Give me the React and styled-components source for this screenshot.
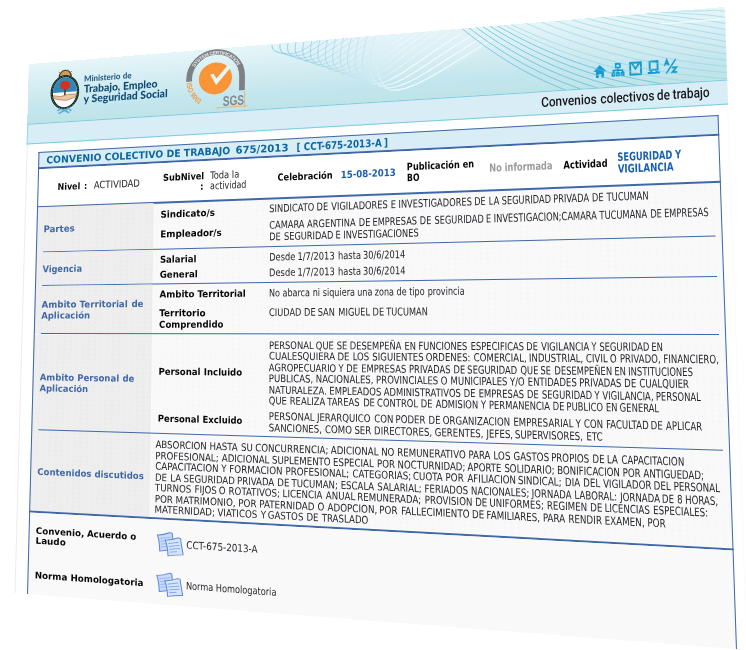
import React, { useLayoutEffect, useRef } from "react";
import styled, { createGlobalStyle } from "styled-components";

/* ---------- projection of the flat sheet onto the tilted one ---------- */
const FLAT = { x: 38, y: 150, w: 680, h: 488 };

const project = (x, y) => {
  const u = (x - FLAT.x) / FLAT.w;
  const v = (y - FLAT.y) / FLAT.h;
  return [
    38.5 + 680 * u - 11.5 * v + 30 * u * v,
    152 - 37 * u + 442 * v + 92 * u * v,
  ];
};

const tiltSmall = (r, fit, anchor) => {
  const flatX = anchor + (r.left + r.width / 2 - anchor) * fit;
  const flatY = r.top + r.height / 2;
  const [x, y] = project(flatX, flatY);
  const [x1, y1] = project(flatX + 1, flatY);
  const [x2, y2] = project(flatX, flatY + 1);
  const m = [
    (x1 - x) * fit, (y1 - y) * fit, x2 - x, y2 - y,
    x - (r.left + r.width / 2), y - flatY,
  ];
  return `matrix(${m.map((n) => n.toFixed(5)).join(",")})`;
};

const tiltPanel = (r) => {
  const q = [
    project(r.left, r.top), project(r.right, r.top),
    project(r.right, r.bottom), project(r.left, r.bottom),
  ].map(([x, y]) => [x - r.left, y - r.top]);
  const [[x0, y0], [x1, y1], [x2, y2], [x3, y3]] = q;
  const sx = x0 - x1 + x2 - x3;
  const sy = y0 - y1 + y2 - y3;
  const det = (x1 - x2) * (y3 - y2) - (x3 - x2) * (y1 - y2);
  const g = (sx * (y3 - y2) - (x3 - x2) * sy) / det;
  const h = ((x1 - x2) * sy - sx * (y1 - y2)) / det;
  const W = r.width;
  const H = r.height;
  const m = [
    (x1 - x0 + g * x1) / W, (y1 - y0 + g * y1) / W, 0, g / W,
    (x3 - x0 + h * x3) / H, (y3 - y0 + h * y3) / H, 0, h / H,
    0, 0, 1, 0,
    x0, y0, 0, 1,
  ];
  return `matrix3d(${m.map((n) => n.toFixed(9)).join(",")})`;
};

/* ---------- styles ---------- */
const Global = createGlobalStyle`
  * { box-sizing: border-box; }
  body { margin: 0; background: #fff; overflow: hidden; }
`;

const Stage = styled.main`
  position: relative;
  width: 746px;
  height: 650px;
  overflow: hidden;
  background: #fff;
  padding: 52.4px 0 0 26.2px;
  font-family: "DejaVu Sans Condensed", "DejaVu Sans", sans-serif;
  font-stretch: condensed;
`;

const Sheet = styled.div`
  position: relative;
  width: 702.2px;
`;

const Fill = styled.div`
  position: absolute;
  inset: 0 ${(p) => p.$right || "0"} 0 0;
  background: ${(p) => p.$bg};
  transform-origin: 0 0;
`;

const Rule = styled.div`
  position: absolute;
  left: ${(p) => p.$inset || 0}px;
  right: ${(p) => p.$inset || 0}px;
  ${(p) => (p.$top ? "top: 0;" : "bottom: 0;")}
  height: ${(p) => p.$size || 1}px;
  background: ${(p) => p.$color || "#3f68a9"};
`;

const Edge = styled.div`
  position: absolute;
  top: 0;
  bottom: 0;
  ${(p) => p.$side}: 0;
  width: 1.2px;
  background: ${(p) => p.$color || "#3f68a9"};
`;

const Header = styled.header`
  position: relative;
  height: 65.6px;
`;

const HeaderContent = styled.div`
  position: relative;
  display: flex;
  height: 100%;
  padding-left: 21.8px;
`;

const Brand = styled.div`
  display: flex;
  align-items: center;
  width: 137px;
`;

const BrandText = styled.div`
  display: flex;
  flex-direction: column;
  padding: 0 0 3px 4px;
`;

const Nav = styled.nav`
  display: flex;
  gap: 4.4px;
  padding-top: 43.5px;
  margin-left: 349.5px;
`;

const Icon = styled.svg`
  display: block;
  flex: none;
  overflow: visible;
  width: ${(p) => p.$w}px;
  height: ${(p) => p.$h}px;
`;

const Waves = styled.svg`
  position: absolute;
  left: 0;
  top: 0;
  width: 746px;
  height: 150px;
  pointer-events: none;
`;

const Band = styled.div`
  position: relative;
  height: 22.8px;
  margin-bottom: 9.2px;
`;

const BandContent = styled.div`
  display: flex;
  justify-content: flex-end;
  align-items: center;
  height: 100%;
  padding-right: 18px;
`;

const Table = styled.section`
  position: relative;
  width: 680px;
  margin-left: 11.8px;
`;

const Title = styled.div`
  position: relative;
  display: flex;
  align-items: center;
  height: 19px;
  padding-left: 8px;
`;

const Info = styled.div`
  position: relative;
  display: grid;
  grid-template-columns: 35.5px 69px 47px 66.6px 63.4px 66px 82px 74.5px 53.5px 1fr;
  align-items: center;
  height: 42.4px;
  padding-left: 20.5px;
`;

const Row = styled.div`
  position: relative;
  display: grid;
  grid-template-columns: ${(p) => (p.$wide ? "121px 1fr" : "123.2px 107.8px 1fr")};
  height: ${(p) => p.$h}px;
`;

const Heading = styled.div`
  position: relative;
  display: flex;
  flex-direction: column;
  justify-content: center;
  padding-left: 7.5px;
`;

const Stack = styled.div`
  position: relative;
  display: flex;
  flex-direction: column;
  padding-top: ${(p) => p.$top || 0}px;
`;

const DocGrid = styled.div`
  position: relative;
  height: 90px;
  padding-top: 4px;
`;

const DocRow = styled.div`
  position: relative;
  display: grid;
  grid-template-columns: 116px 29px 1fr;
  align-items: center;
  height: 43px;
  padding-left: 7px;
`;

const TextLine = styled.div`
  flex: none;
  width: ${(p) => p.$width}px;
  white-space: pre;
  height: ${(p) => p.$lh || 11.5}px;
  line-height: ${(p) => p.$lh || 11.5}px;
  margin-top: ${(p) => p.$mt || 0}px;
  margin-left: ${(p) => p.$ml || 0}px;
  color: ${(p) => p.$color || "#25252b"};
  font-size: ${(p) => p.$size || 10.7}px;
  font-weight: ${(p) => p.$weight || (p.$bold ? 700 : 400)};
  font-family: ${(p) => p.$font || "inherit"};
  font-stretch: ${(p) => (p.$font ? "normal" : "condensed")};
`;

const Word = styled.span`
  display: inline-block;
`;

const WIDE = '"DejaVu Sans", sans-serif';
const BLUE = "#4169a8";

/* One line of text; `w` is the width that the line takes on the flat sheet. */
const Line = ({ w, children, ...rest }) => (
  <TextLine data-fit={w} $width={w} {...rest}>
    {children.split(" ").map((word, i) => (
      <React.Fragment key={i}>
        {i > 0 && " "}
        <Word data-tilt="small">{word}</Word>
      </React.Fragment>
    ))}
  </TextLine>
);

const Label = (p) => <Line $bold $font={WIDE} $size={10} $color="#080808" {...p} />;

/* ---------- drawings ---------- */
const headerShape = "M29,64 L725,7 L727,79.5 L28.5,123.5 Z";

const range = (n) => Array.from({ length: n }, (_, i) => i);

const HeaderWaves = () => (
  <Waves viewBox="0 0 746 150" fill="none">
    <defs>
      <clipPath id="hd"><path d={headerShape} /></clipPath>
      <linearGradient id="fan" gradientUnits="userSpaceOnUse" x1="275" y1="0" x2="400" y2="0">
        <stop offset="0" stopColor="#62bddb" />
        <stop offset=".5" stopColor="#a6d9ea" />
        <stop offset="1" stopColor="#f4fcfe" />
      </linearGradient>
      <linearGradient id="glow" x1="0" y1="0" x2="0" y2="1">
        <stop offset="0" stopColor="#e2f0f9" stopOpacity=".9" />
        <stop offset="1" stopColor="#e2f0f9" stopOpacity="0" />
      </linearGradient>
    </defs>
    <g clipPath="url(#hd)">
      <path d="M272,44 Q278,54 291,55 Q345,70 378,85 Q392,94 412,86 Q445,76 495,40 L465,25 Z" fill="url(#glow)" opacity=".6" />
      {range(15).map((i) => {
        const t = i / 14;
        return (
          <path
            key={`a${i}`}
            d={`M${272 + i * 8},${45 - i * 0.9} C${272 + t * 102},${50 + t * 14} ${274 + t * 100},${52 + t * 28} ${286 + t * 104},${54 + t * 36}`}
            stroke="url(#fan)"
            strokeWidth={i > 11 ? 1.3 : 1}
            opacity={i > 9 ? 0.9 : 0.7}
          />
        );
      })}
      {range(18).map((i) => {
        const t = i / 17;
        const ex = 318 + i * 10.2;
        const ey = i < 12 ? 41 - i * 0.9 : 30 + (i - 12) * 2;
        return (
          <path
            key={`b${i}`}
            d={`M${286 + t * 104},${54 + t * 36} C${300 + t * 112},${54 + t * 39} ${ex - 16 - t * 30},${ey + 9 + t * 18} ${ex},${ey}`}
            stroke="url(#fan)"
            strokeWidth={i > 13 ? 1.2 : 0.9}
            opacity={i > 13 ? 0.9 : 0.65}
          />
        );
      })}
      {range(19).map((i) => {
        const sx = 462 + (i < 8 ? i * 7 : 49 + (i - 7) * 15);
        const sy = 28.5 - (sx - 462) * 0.082;
        const ey = 121 - i * 6;
        return (
          <path
            key={`c${i}`}
            d={`M${sx},${sy} C${sx + 48},${sy + (ey - sy) * 0.42} ${Math.min(sx + 120, 705)},${ey - 5} 735,${ey}`}
            stroke={i < 6 ? "#5dbcdb" : "#8ad0e4"}
            strokeWidth="1"
            opacity={i < 6 ? 0.75 : 0.55}
          />
        );
      })}
      <path d="M660,24 L724,19" stroke="#fff" opacity=".8" />
    </g>
  </Waves>
);

const CoatOfArms = () => (
  <Icon data-tilt="small" $w={30} $h={50} viewBox="0 0 30 50">
    <path d="M9,9 A6,7 0 0 1 21,9 Z" fill="#d59a55" stroke="#3c3324" strokeWidth="1.2" />
    <path d="M10,5 L8.5,3.4 M13,3 L12.4,1.4 M17,3 L17.6,1.4 M20,5 L21.5,3.4" stroke="#8c6a32" strokeWidth=".9" />
    <ellipse cx="15" cy="26" rx="14.4" ry="18.8" fill="#13261c" />
    <ellipse cx="15" cy="26" rx="13.2" ry="17.7" fill="none" stroke="#6f9b83" strokeWidth=".7" strokeDasharray="1.6 1.3" />
    <ellipse cx="15" cy="26" rx="12" ry="16.4" fill="#f8fafa" />
    <path d="M3,26 A12,16.4 0 0 1 27,26 Z" fill="#2f86bb" />
    <path d="M14.2,20 h1.7 v11 h-1.7 z" fill="#6c3c28" />
    <path d="M10.5,21 q-1.5,-7.5 4.5,-7.5 q6.5,.5 5,7.5 l-2,1.6 h-5 z" fill="#d13222" />
    <path d="M3.4,29 L11,30.5 Q17,27.5 26.6,29 L25.8,32 L17,35 L10,34 L4,32 Z" fill="#ecc5a2" stroke="#a47550" strokeWidth=".7" />
    <path d="M11,44 Q15,48 19,44 L22,47 M19,44 L15,46 L9,49 M11,44 L8,46 M15,46 L20,49" fill="none" stroke="#5eb2df" strokeWidth="1.8" />
  </Icon>
);

const SgsBadge = () => (
  <Icon data-tilt="small" $w={60} $h={65} viewBox="0 0 60 65">
    <defs>
      <path id="arcTop" d="M4.6,31 A25,25.2 0 0 1 54.6,31" />
      <path id="arcIso" d="M0.4,34 A30,31 0 0 0 15,58" />
    </defs>
    <path d="M3,32.5 V30 A26.6,26.6 0 0 1 56.2,30 V45.5" fill="none" stroke="#7e8083" strokeWidth="5.8" />
    <text fontFamily="Liberation Sans, sans-serif" fontWeight="700" fontSize="5" fill="#e6eaeb">
      <textPath href="#arcTop" startOffset="14" textLength="52">SYSTEM CERTIFICATION</textPath>
    </text>
    <circle cx="29.4" cy="31" r="16.7" fill="#f99437" />
    <path d="M24,26.5 L27.5,26 L30.4,31.2 L41.5,18.5 L45,20.5 L30.2,38 Z" fill="#e9f6f8" />
    <text fontFamily="Liberation Sans, sans-serif" fontWeight="700" fontSize="7.4" fill="#f39a4c">
      <textPath href="#arcIso" textLength="27" lengthAdjust="spacingAndGlyphs">ISO 9001</textPath>
    </text>
    <text x="37" y="60.5" fontFamily="Liberation Sans, sans-serif" fontWeight="700" fontSize="14.5" textLength="21.5" lengthAdjust="spacingAndGlyphs" fill="#85888a">SGS</text>
    <path d="M30,62 H62 M59,46 V64" stroke="#efae74" strokeWidth=".9" />
  </Icon>
);

const C = "#129bd0";
const NavIcon = ({ children }) => (
  <Icon data-tilt="small" $w={13.3} $h={13} viewBox="0 0 13 13" fill="none" stroke={C} strokeWidth="1.9">
    {children}
  </Icon>
);

const DocIcon = () => (
  <Icon data-tilt="small" $w={27} $h={27} viewBox="0 0 27 27">
    <g stroke="#5f88da" strokeWidth="1" strokeLinejoin="round">
      <path d="M1,4.5 Q6,4.5 12.5,1.5 Q16,.8 15.5,4 L17,19 Q10,20 3.5,21.5 Q3,10 1,4.5 Z" fill="#c6dafc" />
      <path d="M3.5,8 L14,6 M4,11 L14.5,9 M4.5,14 L12,12.6 M4.5,17 L12,15.6" stroke="#94b4ee" strokeWidth=".8" />
      <path d="M8.5,9.5 Q14,9.5 20.5,6.5 Q24.5,6 23.5,9 L26,24 Q18,24.5 11.5,26 Q11,15 8.5,9.5 Z" fill="#d6e5fe" />
      <path d="M11.5,13 L21.5,11 M12,16 L22.5,14.3 M12.5,19 L23,17.5 M13,22 L20,21" stroke="#7fa3e8" strokeWidth=".9" />
    </g>
  </Icon>
);

/* ---------- data ---------- */
const INCLUIDO = [
  [387, "PERSONAL QUE SE DESEMPEÑA EN FUNCIONES ESPECIFICAS DE VIGILANCIA Y SEGURIDAD EN"],
  [441, "CUALESQUIERA DE LOS SIGUIENTES ORDENES: COMERCIAL, INDUSTRIAL, CIVIL O PRIVADO, FINANCIERO,"],
  [415.5, "AGROPECUARIO Y DE EMPRESAS PRIVADAS DE SEGURIDAD QUE SE DESEMPEÑEN EN INSTITUCIONES"],
  [410.7, "PUBLICAS, NACIONALES, PROVINCIALES O MUNICIPALES Y/O ENTIDADES PRIVADAS DE CUALQUIER"],
  [422.5, "NATURALEZA. EMPLEADOS ADMINISTRATIVOS DE EMPRESAS DE SEGURIDAD Y VIGILANCIA, PERSONAL"],
  [381.4, "QUE REALIZA TAREAS DE CONTROL DE ADMISION Y PERMANENCIA DE PUBLICO EN GENERAL"],
];

const CONTENIDOS = [
  [513.6, "ABSORCION HASTA SU CONCURRENCIA; ADICIONAL NO REMUNERATIVO PARA LOS GASTOS PROPIOS DE LA CAPACITACION"],
  [533, "PROFESIONAL; ADICIONAL SUPLEMENTO ESPECIAL POR NOCTURNIDAD; APORTE SOLIDARIO; BONIFICACION POR ANTIGUEDAD;"],
  [548, "CAPACITACION Y FORMACION PROFESIONAL; CATEGORIAS; CUOTA POR AFILIACION SINDICAL; DIA DEL VIGILADOR DEL PERSONAL"],
  [545.5, "DE LA SEGURIDAD PRIVADA DE TUCUMAN; ESCALA SALARIAL; FERIADOS NACIONALES; JORNADA LABORAL: JORNADA DE 8 HORAS,"],
  [535, "TURNOS FIJOS O ROTATIVOS; LICENCIA ANUAL REMUNERADA; PROVISION DE UNIFORMES; REGIMEN DE LICENCIAS ESPECIALES:"],
  [494, "POR MATRIMONIO, POR PATERNIDAD O ADOPCION, POR FALLECIMIENTO DE FAMILIARES, PARA RENDIR EXAMEN, POR"],
  [206.3, "MATERNIDAD; VIATICOS Y GASTOS DE TRASLADO"],
];

const DOCS = [
  { label: [[97, "Convenio, Acuerdo o"], [29, "Laudo"]], w: 68.5, text: "CCT-675-2013-A" },
  { label: [[104, "Norma Homologatoria"]], w: 87, text: "Norma Homologatoria" },
];

/* The dotted paper behind the table rows. */
const PAPER = "radial-gradient(circle at 1px 1px, #f6f6f6 .6px, transparent 1px) 0 0 / 6px 5px, #f9f9f9";
const GREY = "radial-gradient(circle at 1px 1px, #eaeaea .6px, transparent 1px) 0 0 / 6px 5px, #eeeeee";

const Section = ({ h, heading, last, wide, children }) => (
  <Row $h={h} $wide={wide}>
    <Heading>
      <Fill data-tilt="panel" $bg={GREY} $right={wide ? "5px" : "7.2px"} />
      {heading.map(([w, t]) => (
        <Label key={t} w={w} $color={BLUE}>{t}</Label>
      ))}
    </Heading>
    {children}
    <Rule data-tilt="small" $inset={last ? 0 : 7} $size={last ? 1.8 : 1.1} />
  </Row>
);

export default function App() {
  const root = useRef(null);

  useLayoutEffect(() => {
    const jobs = [...root.current.querySelectorAll("[data-tilt]")].map((el) => {
      const rect = el.getBoundingClientRect();
      if (el.dataset.tilt === "panel") return [el, tiltPanel(rect)];
      const line = el.closest("[data-fit]");
      if (!line) return [el, tiltSmall(rect, 1, 0)];
      const start = line.firstElementChild.getBoundingClientRect().left;
      const end = line.lastElementChild.getBoundingClientRect().right;
      return [el, tiltSmall(rect, Number(line.dataset.fit) / (end - start), start)];
    });
    jobs.forEach(([el, transform]) => {
      el.style.transform = transform;
    });
  }, []);

  return (
    <>
      <Global />
      <Stage ref={root}>
        <Sheet>
          <Edge data-tilt="small" $side="left" $color="#ececea" />
          <Edge data-tilt="small" $side="right" $color="#fafafa" />
          <Header>
            <Fill data-tilt="panel" $bg="linear-gradient(180deg,#e6f6f8 0%,#d8eff5 30%,#d0ebef 50%,#c3e6ef 74%,#bfe4e7 100%)" />
            <HeaderContent>
              <Brand>
                <CoatOfArms />
                <BrandText>
                  <Line w={47.5} $weight={900} $font="Lato, sans-serif" $size={9} $lh={11.2} $color="#2b6288">Ministerio de</Line>
                  <Line w={74} $weight={900} $font="Lato, sans-serif" $size={11.6} $lh={11.2} $color="#124a75">Trabajo, Empleo</Line>
                  <Line w={84} $weight={900} $font="Lato, sans-serif" $size={11.6} $lh={11.2} $color="#124a75">y Seguridad Social</Line>
                </BrandText>
              </Brand>
              <SgsBadge />
              <Nav>
                <NavIcon>
                  <path d="M0,7 L6.5,1 L13,7 Z" fill={C} stroke="none" />
                  <path d="M2.5,6.5 H10.5 V13 H8 V9.5 H5.2 V13 H2.5 Z" fill={C} stroke="none" />
                </NavIcon>
                <NavIcon>
                  <path d="M4.5,.9 H8.8 V4.4 H4.5 Z M6.6,5 V9 M2,9 V7 H11.3 V9 M.9,9.5 H3.2 V12 H.9 Z M5.4,9.5 H7.7 V12 H5.4 Z M10,9.5 H12.3 V12 H10 Z" strokeWidth="1.6" />
                </NavIcon>
                <NavIcon>
                  <path d="M1,1 H11.8 V12 H1 Z M3,2 L6.2,6.5 L10,2" />
                </NavIcon>
                <NavIcon>
                  <path d="M2.6,1 H10.5 V8.7 H2.6 Z M.5,11.5 H12.6 M4,9 V11 M9.2,9 V11" />
                </NavIcon>
                <NavIcon>
                  <path d="M2,13 L12,0" strokeWidth="1.4" />
                  <path d="M.4,6 L2.8,.6 L4.8,5.5 M1.4,4.2 H4.3" strokeWidth="1.6" />
                  <path d="M7.6,7.8 H12.4 L8.2,12.2 H13" strokeWidth="1.8" />
                </NavIcon>
              </Nav>
            </HeaderContent>
          </Header>
          <Band>
            <Fill data-tilt="panel" $bg="#d8edf6" />
            <Rule data-tilt="small" $top $color="#7bcae2" $size={1.2} />
            <Rule data-tilt="small" $color="#7bcae2" $size={1.2} />
            <Edge data-tilt="small" $side="left" $color="#9ad6e8" />
            <BandContent>
              <Line w={169} $font="Roboto, sans-serif" $weight={500} $size={12.8} $lh={16} $color="#17171b">Convenios colectivos de trabajo</Line>
            </BandContent>
          </Band>

          <Table>
            <Fill data-tilt="panel" $bg={PAPER} />
            <Title>
              <Fill data-tilt="panel" $bg="#d8edf6" />
              <Rule data-tilt="small" $top />
              <Label w={184} $size={10.7} $color="#0e67a3">CONVENIO COLECTIVO DE TRABAJO</Label>
              <Label w={53} $size={10.7} $color="#0e67a3" $ml={5}>675/2013</Label>
              <Line w={92} $bold $size={10.7} $color="#0e67a3" $ml={8}>[ CCT-675-2013-A ]</Line>
              <Rule data-tilt="small" $size={1.7} />
            </Title>
            <Info>
              <Fill data-tilt="panel" $bg="#ffffff" />
              <Label w={28.5}>Nivel :</Label>
              <Line w={46}>ACTIVIDAD</Line>
              <div>
                <Label w={41}>SubNivel</Label>
                <Label w={3.5} $ml={37}>:</Label>
              </div>
              <div>
                <Line w={29}>Toda la</Line>
                <Line w={36}>actividad</Line>
              </div>
              <Label w={55}>Celebración</Label>
              <Label w={55} $color="#1960b4">15-08-2013</Label>
              <div>
                <Label w={67}>Publicación en</Label>
                <Label w={12.5}>BO</Label>
              </div>
              <Line w={63} $bold $color="#9b9b9f">No informada</Line>
              <Label w={44}>Actividad</Label>
              <div>
                <Line w={63.5} $bold $color="#1960b4">SEGURIDAD Y</Line>
                <Line w={55.5} $bold $color="#1960b4">VIGILANCIA</Line>
              </div>
              <Rule data-tilt="small" $size={1.8} />
            </Info>

            <Section h={49.6} heading={[[31, "Partes"]]}>
              <Stack $top={6.4}>
                <Label w={54}>Sindicato/s</Label>
                <Label w={61} $mt={9.4}>Empleador/s</Label>
              </Stack>
              <Stack $top={5}>
                <Line w={376.5}>SINDICATO DE VIGILADORES E INVESTIGADORES DE LA SEGURIDAD PRIVADA DE TUCUMAN</Line>
                <Line w={436} $mt={5.4}>CAMARA ARGENTINA DE EMPRESAS DE SEGURIDAD E INVESTIGACION;CAMARA TUCUMANA DE EMPRESAS</Line>
                <Line w={148.3}>DE SEGURIDAD E INVESTIGACIONES</Line>
              </Stack>
            </Section>

            <Section h={37.4} heading={[[39, "Vigencia"]]}>
              <Stack $top={4.8}>
                <Label w={36}>Salarial</Label>
                <Label w={37.5} $mt={5.2}>General</Label>
              </Stack>
              <Stack $top={4.8}>
                <Line w={135}>Desde 1/7/2013 hasta 30/6/2014</Line>
                <Line w={135} $mt={5.2}>Desde 1/7/2013 hasta 30/6/2014</Line>
              </Stack>
            </Section>

            <Section h={53.2} heading={[[99.5, "Ambito Territorial de"], [48, "Aplicación"]]}>
              <Stack $top={5}>
                <Label w={85}>Ambito Territorial</Label>
                <Label w={45.5} $mt={8.5}>Territorio</Label>
                <Label w={63.3}>Comprendido</Label>
              </Stack>
              <Stack $top={5}>
                <Line w={192.7}>No abarca ni siquiera una zona de tipo provincia</Line>
                <Line w={156.5} $mt={8.5}>CIUDAD DE SAN MIGUEL DE TUCUMAN</Line>
              </Stack>
            </Section>

            <Section h={106} heading={[[92, "Ambito Personal de"], [47.5, "Aplicación"]]}>
              <Stack $top={33.4}>
                <Label w={81.5}>Personal Incluido</Label>
                <Label w={82} $mt={38.9}>Personal Excluido</Label>
              </Stack>
              <Stack $top={5.2}>
                {INCLUIDO.map(([w, t]) => (
                  <Line key={t} w={w}>{t}</Line>
                ))}
                <Line w={422.5} $mt={4.4}>PERSONAL JERARQUICO CON PODER DE ORGANIZACION EMPRESARIAL Y CON FACULTAD DE APLICAR</Line>
                <Line w={324.7}>SANCIONES, COMO SER DIRECTORES, GERENTES, JEFES, SUPERVISORES, ETC</Line>
              </Stack>
            </Section>

            <Section h={90.4} wide last heading={[[103, "Contenidos discutidos"]]}>
              <Stack $top={5.8}>
                {CONTENIDOS.map(([w, t]) => (
                  <Line key={t} w={w}>{t}</Line>
                ))}
              </Stack>
            </Section>

            <DocGrid>
              <Fill data-tilt="panel" $bg="#f9f9f9" />
              {DOCS.map((d) => (
                <DocRow key={d.text}>
                  <div>
                    {d.label.map(([w, t]) => (
                      <Label key={t} w={w}>{t}</Label>
                    ))}
                  </div>
                  <DocIcon />
                  <Line w={d.w}>{d.text}</Line>
                </DocRow>
              ))}
            </DocGrid>
            <Edge data-tilt="small" $side="left" />
            <Edge data-tilt="small" $side="right" />
          </Table>
        </Sheet>
        <HeaderWaves />
      </Stage>
    </>
  );
}
